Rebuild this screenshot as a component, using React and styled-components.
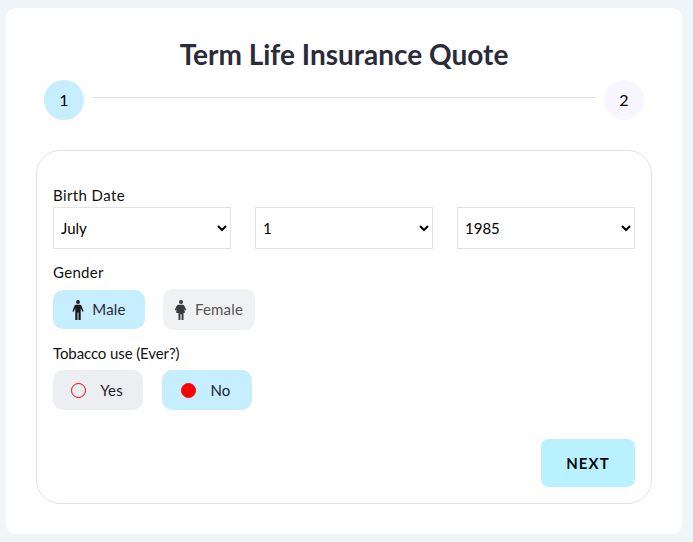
import React from "react";
import styled, { createGlobalStyle } from "styled-components";

const Global = createGlobalStyle`
  html, body { margin: 0; padding: 0; background: #f0f5f9; }
  body { font-family: Lato, "Liberation Sans", sans-serif; color: #000; }
  * { box-sizing: border-box; }
`;

const Page = styled.div`
  width: 693px;
  height: 542px;
  padding: 8px 11px 8px 6px;
  overflow: hidden;
`;
const Card = styled.main`
  height: 526px;
  background: #fff;
  border-radius: 10px;
  padding: 29px 30px 30px 30px;
`;
const Title = styled.h1`
  margin: 0;
  height: 43px;
  font-size: 28px;
  line-height: 34px;
  font-weight: 700;
  color: #2b2b3a;
  text-align: center;
`;
const Stepper = styled.div`
  display: flex;
  align-items: flex-start;
  gap: 8px;
  padding: 0 8px;
  height: 70px;
`;
const Step = styled.div`
  width: 40px;
  height: 40px;
  flex: none;
  border-radius: 50%;
  padding-bottom: 2px;
  display: flex;
  align-items: center;
  justify-content: center;
  font-size: 16px;
  background: ${p => (p.$active ? "#c6eefe" : "#f7f5fe")};
`;
const Line = styled.div`
  flex: 1;
  height: 1px;
  margin-top: 17px;
  background: #e2e2e2;
`;
const Panel = styled.section`
  height: 354px;
  border: 1px solid #e4e4e4;
  border-radius: 24px;
  padding: 35px 16px 16px 16px;
  display: flex;
  flex-direction: column;
`;
const Label = styled.div`
  font-size: 15px;
  line-height: 18px;
  color: #111;
  letter-spacing: ${p => p.$track || 0}px;
`;
const Selects = styled.div`
  display: grid;
  grid-template-columns: repeat(3, 178px);
  justify-content: space-between;
  margin-top: 3px;
  margin-bottom: 14px;
`;
const Select = styled.select`
  height: 42px;
  width: 178px;
  border: 1px solid #e4e4e4;
  border-radius: 0;
  background: #fff;
  padding: 0 3px;
  font-family: Lato, "Liberation Sans", sans-serif;
  font-size: 15px;
  color: #000;
`;
const Options = styled.div`
  display: flex;
  align-items: center;
  gap: ${p => p.$gap}px;
  margin-top: ${p => p.$top}px;
  margin-bottom: ${p => p.$bottom}px;
`;
const Choice = styled.div`
  width: ${p => p.$w}px;
  height: ${p => p.$h}px;
  border-radius: 10px;
  background: ${p => p.$bg};
  color: ${p => p.$color || "#1c1c28"};
  font-size: 15px;
  letter-spacing: 0.2px;
  padding-right: ${p => p.$pr || 0}px;
  display: flex;
  align-items: center;
  justify-content: center;
  gap: ${p => p.$gap}px;
`;
const ChoiceText = styled.span`
  position: relative;
  top: ${p => p.$lift || 0}px;
`;
const Ring = styled.span`
  width: 15px;
  height: 15px;
  border-radius: 50%;
  border: 1px solid #f00;
  background: ${p => (p.$on ? "#f00" : "transparent")};
`;
const Footer = styled.div`
  margin-top: auto;
  display: flex;
  justify-content: flex-end;
`;
const Next = styled.button`
  width: 94px;
  height: 48px;
  border: 0;
  border-radius: 8px;
  background: #b9f1ff;
  font-family: Lato, "Liberation Sans", sans-serif;
  font-size: 15px;
  font-weight: 700;
  letter-spacing: 1.1px;
  color: #0a0a14;
`;

const Male = () => (
  <svg width="12" height="20" viewBox="0 0 12 20" fill="#1a1a1a">
    <circle cx="6" cy="2" r="1.9" />
    <path d="M4 4.800h4c.8 0 1.300.4 1.600 1.100l2 5.300-1.200.5-1.700-3.500V20H6.500v-7.500h-1V20H3.300V8.200L1.600 11.700.4 11.200l2-5.300C2.700 5.200 3.200 4.800 4 4.800z" />
  </svg>
);
const Female = () => (
  <svg width="12" height="20" viewBox="0 0 12 20" fill="#3a3a3a">
    <circle cx="6" cy="2.100" r="2" />
    <path d="M4.200 4.800h3.600c.8 0 1.300.4 1.600 1.100l1.900 3.900-1.100.7-1.200-1.700c.7 1.500.9 2.800.6 4.300H8.500V20H6.600v-5.800H5.400V20H3.500v-6.900H1.400c-.3-1.500-.1-2.800.6-4.300L.8 10.500-.3 9.800l1.900-3.900c.3-.7 1.800-1.100 2.600-1.100z" />
  </svg>
);

export default function App() {
  return (
    <Page>
      <Global />
      <Card>
        <Title>Term Life Insurance Quote</Title>
        <Stepper>
          <Step $active>1</Step>
          <Line />
          <Step>2</Step>
        </Stepper>
        <Panel>
          <Label $track={0.4}>Birth Date</Label>
          <Selects>
            <Select defaultValue="July"><option>July</option></Select>
            <Select defaultValue="1"><option>1</option></Select>
            <Select defaultValue="1985"><option>1985</option></Select>
          </Selects>
          <Label $track={0.3}>Gender</Label>
          <Options $gap={18} $top={8} $bottom={14}>
            <Choice $w={92} $h={39} $bg="#c6eefe" $gap={8} $color="#2a2a3a"><Male /><ChoiceText $lift={-1}>Male</ChoiceText></Choice>
            <Choice $w={92} $h={41} $bg="#f0f1f3" $gap={8} $color="#555"><Female /><ChoiceText $lift={-1}>Female</ChoiceText></Choice>
          </Options>
          <Label $track={-0.1}>Tobacco use (Ever?)</Label>
          <Options $gap={19} $top={8} $bottom={0}>
            <Choice $w={90} $h={40} $bg="#eceef1" $gap={14} $pr={2}><Ring /><ChoiceText>Yes</ChoiceText></Choice>
            <Choice $w={90} $h={40} $bg="#c6eefe" $gap={14} $pr={2}><Ring $on /><ChoiceText>No</ChoiceText></Choice>
          </Options>
          <Footer><Next>NEXT</Next></Footer>
        </Panel>
      </Card>
    </Page>
  );
}
